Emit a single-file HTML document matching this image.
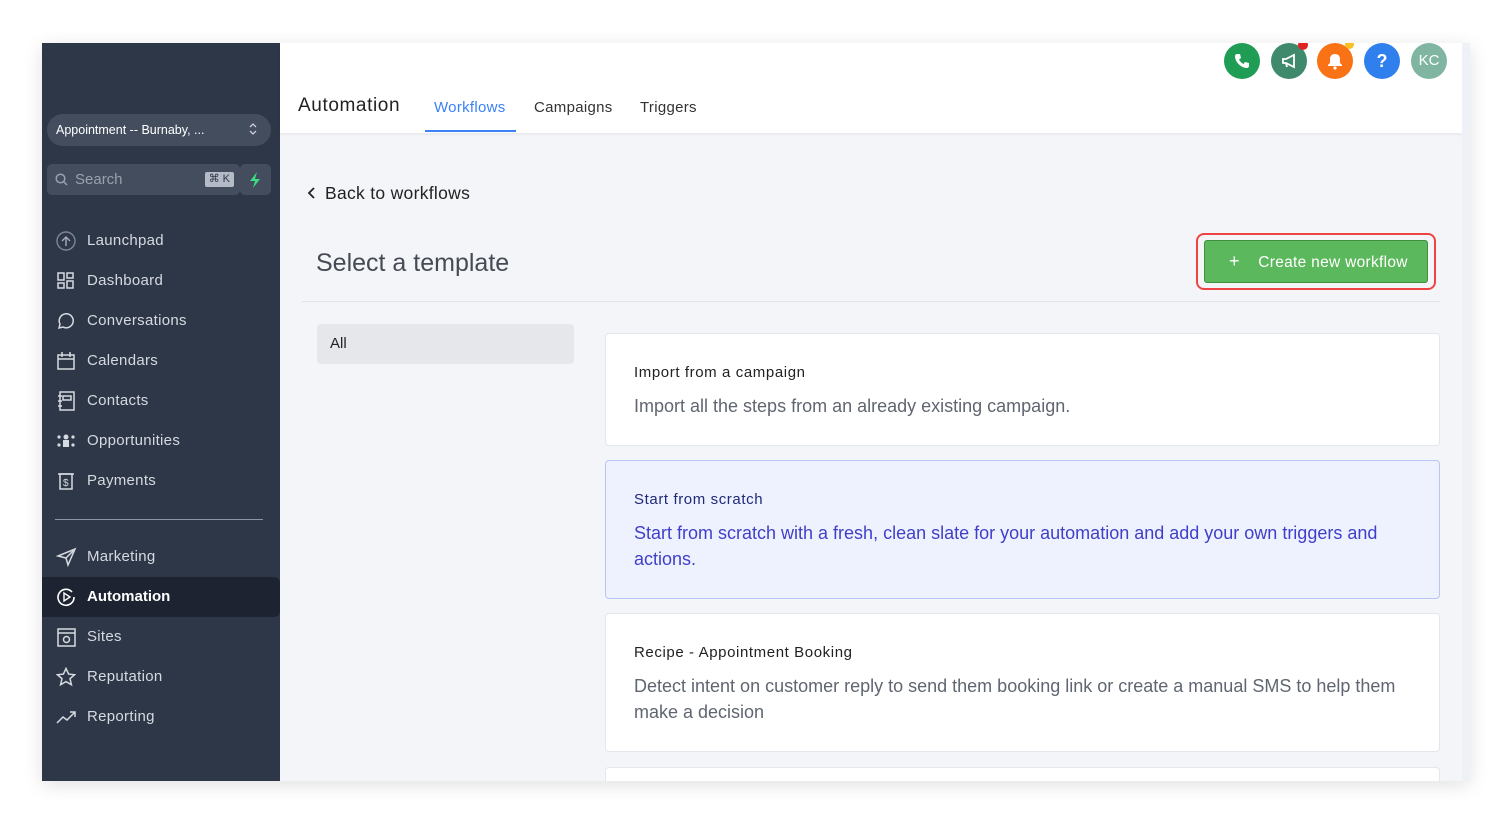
<!DOCTYPE html>
<html><head><meta charset="utf-8"><style>
*{box-sizing:border-box;margin:0;padding:0}
body{width:1512px;height:826px;background:#fff;font-family:"Liberation Sans",sans-serif;position:relative;overflow:hidden}
.frame{position:absolute;left:42px;top:43px;width:1428px;height:738px;background:#f4f5f8;box-shadow:0 4px 18px rgba(0,0,0,.12);overflow:hidden}
.side{position:absolute;left:0;top:0;width:238px;height:738px;background:#2d3748}
.sel{position:absolute;left:5px;top:71px;width:224px;height:32px;border-radius:16px;background:#434d5e;color:#fff;font-size:12.5px;line-height:32px;padding-left:9px}
.sel svg{position:absolute;right:14px;top:8px}
.search{position:absolute;left:5px;top:121px;width:193px;height:31px;border-radius:5px;background:#434d5e;color:#99a1ae;font-size:15px;line-height:31px;padding-left:28px}
.kbd{position:absolute;right:6px;top:8px;background:#b4bbc6;color:#2d3748;font-size:11px;line-height:15px;padding:0 4px;border-radius:2px}
.bolt{position:absolute;left:198px;top:121px;width:31px;height:31px;border-radius:5px;background:#434d5e}
.item{position:absolute;left:0;width:238px;height:40px;color:#d6dae0;font-size:15px;line-height:40px;padding-left:45px;letter-spacing:.3px}
.item svg{position:absolute;left:14px;top:10px}
.item.act{background:#1d2331;color:#fff;font-weight:bold;border-radius:0 6px 6px 0;letter-spacing:0}
.hr{position:absolute;left:13px;top:476px;width:208px;height:1px;background:#8b94a3}
.head{position:absolute;left:238px;top:0;width:1182px;height:90px;background:#fff;box-shadow:0 1px 3px rgba(0,0,0,.08)}
.rs{position:absolute;left:1420px;top:0;width:8px;height:738px;background:#eef1f6}
.title{position:absolute;left:18px;top:52px;font-size:19px;color:#222;letter-spacing:.6px}
.tab{position:absolute;top:56px;font-size:15px;color:#333;letter-spacing:.3px}
.circ{position:absolute;top:0;width:36px;height:36px;border-radius:50%;color:#fff;text-align:center;line-height:36px;font-weight:bold}
.circ svg{position:absolute;left:9px;top:9px}
.dot{position:absolute;right:-1px;top:-3px;border-radius:50%}
.card{position:absolute;left:563px;width:835px;background:#fff;border:1px solid #e3e6ea;border-radius:4px;padding-left:28px;padding-right:20px}
.card h4{font-size:15px;font-weight:normal;color:#222;margin-top:30px;letter-spacing:.6px}
.card p{font-size:18px;color:#5f6671;line-height:26px;margin-top:12px}
</style></head><body>
<div class="frame">
<div class="side">
<div class="sel">Appointment -- Burnaby, ...<svg width="8" height="14" viewBox="0 0 8 14"><path d="M1 5l3-3 3 3M1 9l3 3 3-3" fill="none" stroke="#ccd" stroke-width="1.3"/></svg></div>
<div class="search"><svg style="position:absolute;left:8px;top:9px" width="13" height="13" viewBox="0 0 13 13"><circle cx="5.5" cy="5.5" r="4.3" fill="none" stroke="#99a1ae" stroke-width="1.5"/><path d="M8.7 8.7L12 12" stroke="#99a1ae" stroke-width="1.5"/></svg>Search<span class="kbd">⌘ K</span></div>
<div class="bolt"><svg width="31" height="31" viewBox="0 0 31 31"><path d="M17 8l-7 9h5l-2 7 7-9h-5z" fill="#3ddc84"/></svg></div>
<div class="item" style="top:178px"><svg width="20" height="20"><circle cx="10" cy="10" r="9" fill="none" stroke="#7d8694" stroke-width="1.4"/><path d="M10 15V6M6 10l4-4 4 4" fill="none" stroke="#aab" stroke-width="1.4"/></svg>Launchpad</div>
<div class="item" style="top:218px"><svg width="20" height="20"><g fill="none" stroke="#d6dae0" stroke-width="1.5"><rect x="2" y="2" width="6" height="7"/><rect x="11" y="2" width="6" height="5"/><rect x="2" y="12" width="6" height="5"/><rect x="11" y="10" width="6" height="7"/></g></svg>Dashboard</div>
<div class="item" style="top:258px"><svg width="20" height="20"><path d="M3 17l1-4a7 7 0 1 1 3 3z" fill="none" stroke="#d6dae0" stroke-width="1.5"/></svg>Conversations</div>
<div class="item" style="top:298px"><svg width="20" height="20"><g fill="none" stroke="#d6dae0" stroke-width="1.5"><rect x="2" y="4" width="16" height="14"/><path d="M2 8h16M6 1v5M14 1v5"/></g></svg>Calendars</div>
<div class="item" style="top:338px"><svg width="20" height="20"><g fill="none" stroke="#d6dae0" stroke-width="1.5"><rect x="4" y="1" width="14" height="18"/><rect x="7" y="5" width="8" height="4"/><path d="M2 5h4M2 10h4M2 15h4"/></g></svg>Contacts</div>
<div class="item" style="top:378px"><svg width="20" height="20"><g fill="#d6dae0"><circle cx="10" cy="6" r="2.5"/><rect x="7" y="9" width="6" height="7"/><circle cx="3" cy="6" r="1.6"/><circle cx="17" cy="6" r="1.6"/><circle cx="3" cy="14" r="1.6"/><circle cx="17" cy="14" r="1.6"/></g></svg>Opportunities</div>
<div class="item" style="top:418px"><svg width="20" height="20"><g fill="none" stroke="#d6dae0" stroke-width="1.5"><rect x="4" y="3" width="12" height="15"/><path d="M2 3h16"/></g><text x="7" y="15" font-size="10" fill="#d6dae0" font-family="Liberation Sans">$</text></svg>Payments</div>
<div class="hr"></div>
<div class="item" style="top:494px"><svg width="22" height="20"><path d="M2 9L19 2 12 18 10 11z M10 11L19 2" fill="none" stroke="#d6dae0" stroke-width="1.5"/></svg>Marketing</div>
<div class="item act" style="top:534px"><svg width="20" height="20"><path d="M16 5A8 8 0 1 0 18 10" fill="none" stroke="#fff" stroke-width="1.6"/><path d="M8 6v8l6-4z" fill="none" stroke="#fff" stroke-width="1.4"/></svg>Automation</div>
<div class="item" style="top:574px"><svg width="20" height="20"><g fill="none" stroke="#d6dae0" stroke-width="1.5"><rect x="2" y="2" width="17" height="17"/><path d="M2 6h17"/><circle cx="10.5" cy="12.5" r="3"/></g></svg>Sites</div>
<div class="item" style="top:614px"><svg width="20" height="20"><path d="M10 1.5l2.6 5.6 6 .6-4.6 4 1.4 6L10 14.6 4.6 17.7l1.4-6-4.6-4 6-.6z" fill="none" stroke="#d6dae0" stroke-width="1.5"/></svg>Reputation</div>
<div class="item" style="top:654px"><svg width="22" height="20"><path d="M1 16l6-6 4 3 8-8M14 5h5v5" fill="none" stroke="#d6dae0" stroke-width="1.5"/></svg>Reporting</div>
</div>
<div class="head">
<div class="title">Automation</div>
<div class="tab" style="left:154px;color:#3b82f6">Workflows</div>
<div style="position:absolute;left:145px;top:87px;width:91px;height:2px;background:#3b82f6"></div>
<div class="tab" style="left:254px">Campaigns</div>
<div class="tab" style="left:360px">Triggers</div>
<div class="circ" style="left:944px;background:#1f9d55"><svg width="18" height="18" viewBox="0 0 18 18"><path d="M4 2l3 0 1 4-2 1.5c1 2 2.5 3.5 4.5 4.5L12 10l4 1v3c0 1-1 2-2 2C8 16 2 10 2 4c0-1 1-2 2-2z" fill="#fff"/></svg></div>
<div class="circ" style="left:991px;background:#3f8a6d"><svg width="18" height="18" viewBox="0 0 18 18"><path d="M3 7h3l8-4v12l-8-4H3z" fill="none" stroke="#fff" stroke-width="1.8"/><path d="M6 11l1 4" stroke="#fff" stroke-width="1.8"/></svg><span class="dot" style="width:10px;height:10px;background:#e02424"></span></div>
<div class="circ" style="left:1037px;background:#f97316"><svg width="18" height="18" viewBox="0 0 18 18"><path d="M9 2c-3 0-5 2-5 5v4l-2 2v1h14v-1l-2-2V7c0-3-2-5-5-5z" fill="#fff"/><circle cx="9" cy="16" r="1.6" fill="#fff"/></svg><span class="dot" style="width:9px;height:9px;background:#fbbf24"></span></div>
<div class="circ" style="left:1084px;background:#2f80ed;font-size:18px">?</div>
<div class="circ" style="left:1131px;background:#7fb5a1;font-weight:normal;font-size:15px">KC</div>
</div>
<div class="rs"></div>
<div style="position:absolute;left:265px;top:140px;font-size:17.5px;color:#222;letter-spacing:.3px"><svg width="10" height="14" viewBox="0 0 10 14" style="vertical-align:-1px;margin-right:8px"><path d="M7 2L2 7l5 5" fill="none" stroke="#222" stroke-width="1.8"/></svg>Back to workflows</div>
<div style="position:absolute;left:274px;top:206px;font-size:25px;color:#454b55">Select a template</div>
<div style="position:absolute;left:1154px;top:190px;width:240px;height:57px;border:2px solid #ef4444;border-radius:8px"></div>
<div style="position:absolute;left:1162px;top:197px;width:224px;height:43px;background:#5cb85c;border:1px solid #3f8f3f;border-radius:3px;color:#fff;font-size:15.5px;line-height:41px;padding-left:24px;letter-spacing:.3px"><b style="font-size:18px;font-weight:normal">+</b>&nbsp;&nbsp;&nbsp; Create new workflow</div>
<div style="position:absolute;left:260px;top:258px;width:1138px;height:1px;background:#e2e5e9"></div>
<div style="position:absolute;left:275px;top:281px;width:257px;height:40px;background:#e5e7eb;border-radius:4px;font-size:15px;line-height:40px;padding-left:13px;color:#222">All</div>
<div class="card" style="top:290px;height:113px"><h4>Import from a campaign</h4><p>Import all the steps from an already existing campaign.</p></div>
<div class="card" style="top:417px;height:139px;background:#eef2fe;border-color:#b9c6f3"><h4 style="color:#1e2a78">Start from scratch</h4><p style="color:#3f3fc9">Start from scratch with a fresh, clean slate for your automation and add your own triggers and actions.</p></div>
<div class="card" style="top:570px;height:139px"><h4>Recipe - Appointment Booking</h4><p>Detect intent on customer reply to send them booking link or create a manual SMS to help them make a decision</p></div>
<div class="card" style="top:724px;height:40px"></div>
</div>
</body></html>
